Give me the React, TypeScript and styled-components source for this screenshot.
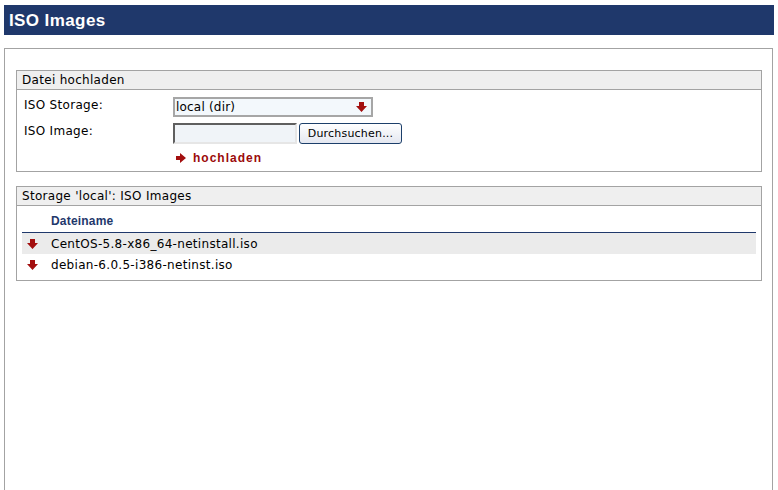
import React from "react";
import styled, { createGlobalStyle } from "styled-components";

const Global = createGlobalStyle`
  html, body { margin: 0; padding: 0; background: #fff; }
  body { font-family: "DejaVu Sans", Verdana, sans-serif; font-size: 12px; letter-spacing: 0.3px; color: #000; }
`;

const Page = styled.div`
  padding: 5px 4px 0 4px;
  height: 490px;
  box-sizing: border-box;
  display: flex;
  flex-direction: column;
`;

const TitleBar = styled.div`
  height: 30px;
  background: #1f386b;
  color: #fff;
  font-family: "Liberation Sans", Arial, sans-serif;
  font-weight: bold;
  font-size: 17px;
  letter-spacing: 0.4px;
  display: flex;
  align-items: center;
  padding-left: 5px;
  padding-top: 1px;
  box-sizing: border-box;
`;

const Panel = styled.div`
  margin-top: 13px;
  margin-right: 1px;
  flex: 1;
  border: 1px solid #a3a3a3;
  border-bottom: none;
  padding: 21px 10px 0 11px;
  display: flex;
  flex-direction: column;
  gap: 14px;
`;

const Box = styled.div`
  border: 1px solid #a3a3a3;
`;

const BoxHead = styled.div`
  background: #efefef;
  border-bottom: 1px solid #a3a3a3;
  height: 18px;
  line-height: 18px;
  padding-left: 5px;
`;

const FormGrid = styled.div`
  display: grid;
  grid-template-columns: 149px auto;
  row-gap: 6px;
  padding: 7px 0 6px 7px;
  align-items: start;
`;

const Label = styled.div`
  line-height: 17px;
`;

const Field = styled.div`
  display: flex;
  align-items: center;
  gap: 2px;
`;

const Select = styled.div`
  box-sizing: border-box;
  width: 200px;
  height: 20px;
  border: 2px solid #a6a6a6;
  background: #f3f8fc;
  display: flex;
  align-items: center;
  justify-content: space-between;
  padding: 0 4px 0 1px;
  font-size: 12px;
  letter-spacing: 0.2px;
`;

const Input = styled.div`
  width: 120px;
  height: 17px;
  border: 2px solid;
  border-color: #5f5f5f #e6e6e6 #e6e6e6 #5f5f5f;
  background: #f0f4f8;
`;

const Button = styled.button`
  width: 103px;
  height: 21px;
  border: 1px solid #1c3f6a;
  border-radius: 3px;
  background: linear-gradient(#ffffff, #e4e7f0);
  font-family: "DejaVu Sans", Verdana, sans-serif;
  font-size: 11px;
  letter-spacing: 0.2px;
  color: #000;
  padding: 0;
`;

const Action = styled.div`
  grid-column: 2;
  display: flex;
  align-items: center;
  gap: 7px;
  padding-left: 3px;
  margin-top: 1px;
  height: 14px;
  color: #9b0a0a;
  font-family: "Liberation Sans", Arial, sans-serif;
  font-weight: bold;
  font-size: 12px;
  letter-spacing: 1px;
`;

const Table = styled.div`
  padding: 6px 5px 5px 5px;
`;

const HeadRow = styled.div`
  display: flex;
  align-items: center;
  height: 18px;
  padding-left: 29px;
  padding-bottom: 2px;
  border-bottom: 1px solid #1f386b;
  color: #1f386b;
  font-family: "Liberation Sans", Arial, sans-serif;
  font-weight: bold;
  font-size: 12px;
  letter-spacing: 0.2px;
`;

const Row = styled.div<{ $shade?: boolean }>`
  display: flex;
  align-items: center;
  height: 21px;
  background: ${(p) => (p.$shade ? "#ebebeb" : "transparent")};
  padding-left: 5px;
  gap: 13px;
`;

const DownArrow = () => (
  <svg width="11" height="10" viewBox="0 0 11 10">
    <path d="M3 0h5v4h3L5.5 10 0 4h3z" fill="#a30f0f" />
  </svg>
);

const RightArrow = () => (
  <svg width="10" height="10" viewBox="0 0 10 10">
    <path d="M0 3h4V0l6 5-6 5V7H0z" fill="#a30f0f" />
  </svg>
);

export default function App() {
  return (
    <>
      <Global />
      <Page>
        <TitleBar>ISO Images</TitleBar>
        <Panel>
          <Box>
            <BoxHead>Datei hochladen</BoxHead>
            <FormGrid>
              <Label>ISO Storage:</Label>
              <Field>
                <Select>
                  <span>local (dir)</span>
                  <DownArrow />
                </Select>
              </Field>
              <Label>ISO Image:</Label>
              <Field>
                <Input />
                <Button>Durchsuchen...</Button>
              </Field>
              <Action>
                <RightArrow />
                <span>hochladen</span>
              </Action>
            </FormGrid>
          </Box>
          <Box>
            <BoxHead>Storage 'local': ISO Images</BoxHead>
            <Table>
              <HeadRow>Dateiname</HeadRow>
              <Row $shade>
                <DownArrow />
                <span>CentOS-5.8-x86_64-netinstall.iso</span>
              </Row>
              <Row>
                <DownArrow />
                <span>debian-6.0.5-i386-netinst.iso</span>
              </Row>
            </Table>
          </Box>
        </Panel>
      </Page>
    </>
  );
}
